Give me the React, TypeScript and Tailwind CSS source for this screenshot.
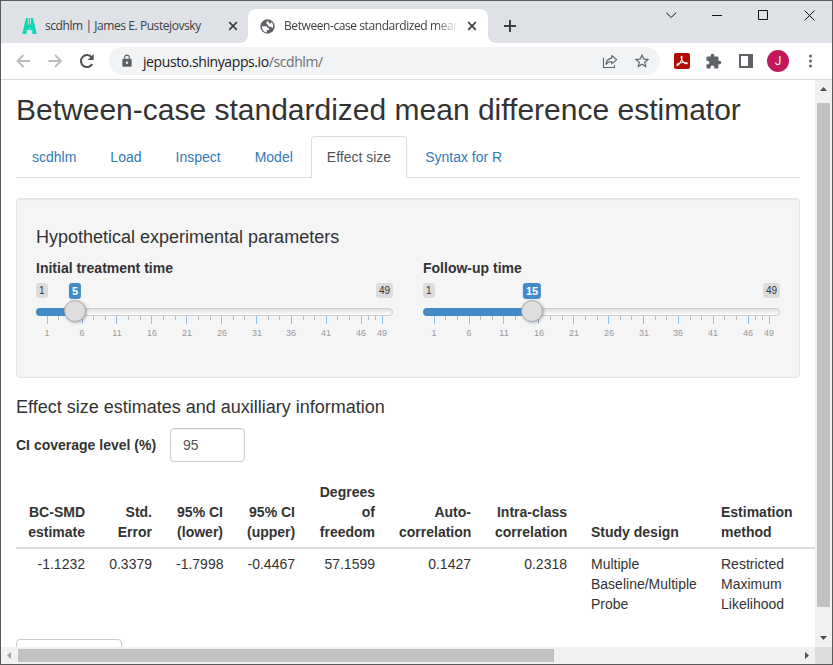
import React from "react";
import { MdExtension, MdLock, MdStarBorder } from "react-icons/md";

const uiFont = "font-['Open_Sans','Noto_Sans',sans-serif]";

function CloseIcon({ className }: { className: string }) {
  return (
    <svg className={className} width="10" height="10" viewBox="0 0 10 10" stroke="#3c4043" strokeWidth="1.7" fill="none">
      <path d="M1.200 1.200l7.600 7.600M8.800 1.200l-7.600 7.600" />
    </svg>
  );
}

function Favicon() {
  return (
    <svg className="ml-[21px] shrink-0" width="15" height="17" viewBox="0 0 15 17">
      <path d="M4 0h7l3.700 16h-4.200L9.600 12H5.200l-.9 4H.2z" fill="#0cd5b8" />
      <path d="M5.900 0v5.500c0 .9.500 1.500 1 1.800V0zM9 0v5.500c0 .9-.5 1.500-1 1.800V0z" fill="#b5e3df" />
      <path d="M7.450 9v3M4.200 13.500l.5-2M10.700 13.500l-.5-2" fill="none" stroke="#8fe3da" strokeWidth=".6" />
    </svg>
  );
}

function GlobeIcon() {
  return (
    <svg className="ml-[12px] shrink-0" width="15" height="15" viewBox="0 0 15 15">
      <circle cx="7.500" cy="7.500" r="7.200" fill="#5f6368" />
      <path d="M1.900 7.200h3.600c1.400 0 2.200.8 2.200 2.100H9v1.600H6.800v2.400c-2.900-.2-5.100-2.900-4.900-6.100z" fill="#fff" />
      <path d="M7.600 1.700c-.3 1.100-1.300 1.300-1.300 2.300 0 1.300 1.700 1.200 1.800 2.600.1 1 1.200 1.200 2.700 1.200.9 0 1.100 1 1.900 1.300.9-2.200.3-4.600-1.300-6-.1 1.200-1 1.400-2 1.300-.7-.1-.4-1.900-1.800-2.700z" fill="#fff" />
    </svg>
  );
}

function TabStrip() {
  return (
    <div className="flex h-[42px] shrink-0 bg-[#dee1e6] text-[#3c4043]">
      <div className="flex h-[34px] w-[239px] items-center self-end">
        <Favicon />
        <span className="ml-[8px] w-[172px] whitespace-nowrap text-[12px] tracking-[-0.43px]">scdhlm | James E. Pustejovsky</span>
        <CloseIcon className="ml-[11px]" />
      </div>
      <svg className="h-2 w-2 shrink-0 self-end" viewBox="0 0 8 8">
        <path d="M8 0v8H0a8 8 0 0 0 8-8z" fill="#fff" />
      </svg>
      <div className="flex h-[34px] w-[240px] items-center self-end rounded-t-lg bg-white">
        <GlobeIcon />
        <span className="ml-[9px] w-[175px] overflow-hidden text-clip whitespace-nowrap text-[12px] tracking-[-0.42px] [mask-image:linear-gradient(to_right,#000_86%,transparent)]">
          Between-case standardized mean
        </span>
        <CloseIcon className="ml-[8px] shrink-0" />
      </div>
      <svg className="h-2 w-2 shrink-0 self-end" viewBox="0 0 8 8">
        <path d="M0 0v8h8a8 8 0 0 1-8-8z" fill="#fff" />
      </svg>
      <svg className="ml-[8px] mt-[19px]" width="12" height="12" viewBox="0 0 12 12" stroke="#3c4043" strokeWidth="2">
        <path d="M6 0v12M0 6h12" />
      </svg>
      <svg className="ml-auto mr-[12px] mt-[8px]" width="154" height="12" viewBox="0 0 154 12" stroke="#111" strokeWidth="1" fill="none">
        <path d="M.2 3.500l5 5 5-5" />
        <path d="M46 6.500h10" />
        <path d="M92.500 1.500h9v9h-9z" />
        <path d="M138.500 1.500l10 10M148.500 1.500l-10 10" />
      </svg>
    </div>
  );
}

function Toolbar() {
  return (
    <div className="flex h-[37px] shrink-0 items-center border-b border-[#dadce0] bg-white">
      <svg className="ml-[14px]" width="15" height="14" viewBox="0 0 15 14" fill="none" stroke="#babcbe" strokeWidth="1.8">
        <path d="M15 7H2.500M8.500 1l-6 6 6 6" />
      </svg>
      <svg className="ml-[18px]" width="15" height="14" viewBox="0 0 15 14" fill="none" stroke="#babcbe" strokeWidth="1.8">
        <path d="M.5 7h12.500M7 1l6 6-6 6" />
      </svg>
      <svg className="ml-[16px]" width="16" height="16" viewBox="0 0 16 16">
        <path d="M13.200 11A6 6 0 1 1 12.600 4.200" fill="none" stroke="#4d5156" strokeWidth="2" />
        <path d="M14.700 1v6H8.700z" fill="#4d5156" />
      </svg>
      <div className="ml-[14px] flex h-[28px] w-[551px] items-center rounded-full bg-[#f1f3f4]">
        <MdLock className="mb-px ml-[11px] text-[#5f6368]" size={14} />
        <span className={`ml-[9px] text-[14px] tracking-[-0.41px] text-[#202124] ${uiFont}`}>
          jepusto.shinyapps.io<span className="text-[#6a6e73]">/scdhlm/</span>
        </span>
        <svg className="ml-auto" width="16" height="15" viewBox="0 0 16 15" fill="none" stroke="#5f6368" strokeWidth="1.1">
          <path d="M1.500 4v9.500h11v-2.500" />
          <path d="M9.700 1.500l5 4.200-5 4.200V7.500c-2.500 0-4.200.8-5.700 2.900.3-3.200 2.400-5.800 5.700-6.300z" strokeLinejoin="round" />
        </svg>
        <MdStarBorder className="mr-[9px] ml-[15px] text-[#5f6368]" size={18} />
      </div>
      <svg className="ml-[14px]" width="16" height="16" viewBox="0 0 16 16" fill="none">
        <rect width="16" height="16" rx="2" fill="#b30b00" />
        <path d="M7.400 3.200c1.400-.1.500 3.400-1 6-1.400 2.500-3.500 4-3.600 2.900 0-1.200 3.500-2.400 6.500-2.600 3.300-.3 4.500.5 3.800 1.100-1 .8-4-1.300-5.200-3.700-.9-1.800-1-3.600-.5-3.700z" stroke="#fff" strokeWidth="1.050" />
      </svg>
      <MdExtension className="ml-[15px] text-[#5f6368]" size={17} />
      <svg className="ml-[17px]" width="14" height="14" viewBox="0 0 14 14">
        <path fillRule="evenodd" d="M0 0h14v14H0zM2 2v10h7V2z" fill="#5f6368" />
      </svg>
      <div className="ml-[14px] flex h-[22px] w-[22px] items-center justify-center rounded-full bg-[#c2185b] font-[Roboto,sans-serif] text-[12px] text-white">J</div>
      <svg className="ml-[19px]" width="4" height="14" viewBox="0 0 4 14" fill="#5f6368">
        <circle cx="2.500" cy="2" r="1.500" />
        <circle cx="2.500" cy="7" r="1.500" />
        <circle cx="2.500" cy="12" r="1.500" />
      </svg>
    </div>
  );
}

const tabs = ["scdhlm", "Load", "Inspect", "Model", "Effect size", "Syntax for R"];

function NavTabs() {
  return (
    <div className="mt-[10px] flex h-[42px] w-[784px] border-b border-[#ddd]">
      {tabs.map((t) => (
        <div
          key={t}
          className={
            t === "Effect size"
              ? "mr-[2px] h-[42px] rounded-t-[4px] border border-b-0 border-[#ddd] bg-white px-[15px] py-[10px] text-[#555]"
              : "mr-[2px] h-[42px] border border-b-0 border-transparent px-[15px] py-[10px] text-[#337ab7]"
          }
        >
          {t}
        </div>
      ))}
    </div>
  );
}

const majors = [1, 6, 11, 16, 21, 26, 31, 36, 41, 46, 49];
const tickX = (v: number) => 11.2 + ((v - 1) * 335) / 48;

function Slider({ label, value }: { label: string; value: number }) {
  const center = Math.round(tickX(value));
  return (
    <div className="w-[357px]">
      <div className="mb-[5px] font-bold">{label}</div>
      <div className="relative h-[57px]">
        <div className="flex justify-between text-[10px] leading-[15px] text-[#333]">
          <span className="rounded-[3px] bg-black/10 px-[3px]">1</span>
          <span className="rounded-[3px] bg-black/10 px-[3px]">49</span>
        </div>
        <span
          className="absolute top-0 -translate-x-1/2 rounded-[3px] bg-[#428bca] px-[3px] text-[11px] leading-[16px] font-bold text-white"
          style={{ left: center }}
        >
          {value}
        </span>
        <div className="mt-[10px] h-[8px] rounded-[8px] border border-[#ccc] bg-gradient-to-b from-[#dedede] to-white" />
        <div className="absolute top-[25px] left-0 h-[8px] rounded-l-[8px] bg-[#428bca]" style={{ width: center }} />
        {majors.map((v, i) => {
          const next = majors[i + 1];
          const gap = next ? (next - v) / 3 : 0;
          return (
            <React.Fragment key={v}>
              <i className="absolute top-[33px] h-[8px] w-px bg-[#99bfe0]" style={{ left: Math.floor(tickX(v)) }} />
              {next && <i className="absolute top-[33px] h-[4px] w-px bg-[#bbb]" style={{ left: Math.floor(tickX(v + gap)) }} />}
              {next && <i className="absolute top-[33px] h-[4px] w-px bg-[#bbb]" style={{ left: Math.floor(tickX(v + gap * 2)) }} />}
              <span className="absolute top-[45px] -translate-x-1/2 text-[9px] leading-[10px] text-[#999]" style={{ left: Math.round(tickX(v)) }}>
                {v}
              </span>
            </React.Fragment>
          );
        })}
        <div
          className="absolute top-[17px] h-[22px] w-[22px] rounded-full border border-[#ababab] bg-[#dedede] shadow-[1px_1px_3px_rgba(0,0,0,0.25)]"
          style={{ left: center - 11 }}
        />
      </div>
    </div>
  );
}

const columns = [
  { head: ["BC-SMD", "estimate"], cell: ["-1.1232"], cls: "w-[81px] text-right" },
  { head: ["Std.", "Error"], cell: ["0.3379"], cls: "w-[67px] text-right" },
  { head: ["95% CI", "(lower)"], cell: ["-1.7998"], cls: "w-[71px] text-right" },
  { head: ["95% CI", "(upper)"], cell: ["-0.4467"], cls: "w-[72px] text-right" },
  { head: ["Degrees", "of", "freedom"], cell: ["57.1599"], cls: "w-[80px] text-right" },
  { head: ["Auto-", "correlation"], cell: ["0.1427"], cls: "w-[96px] text-right" },
  { head: ["Intra-class", "correlation"], cell: ["0.2318"], cls: "w-[96px] text-right" },
  { head: ["Study design"], cell: ["Multiple", "Baseline/Multiple", "Probe"], cls: "w-[130px] text-left" },
  { head: ["Estimation", "method"], cell: ["Restricted", "Maximum", "Likelihood"], cls: "w-[130px] text-left" },
];

const lines = (items: string[]) => items.map((s) => <div key={s}>{s}</div>);

function ResultsTable() {
  return (
    <table className="mt-[15px] w-[823px] table-fixed border-collapse whitespace-nowrap">
      <thead>
        <tr className="h-[71px] border-b-2 border-[#ddd]">
          {columns.map((c, i) => (
            <th key={i} className={`px-[12px] py-[5px] align-bottom font-bold ${c.cls}`}>
              {lines(c.head)}
            </th>
          ))}
        </tr>
      </thead>
      <tbody>
        <tr>
          {columns.map((c, i) => (
            <td key={i} className={`px-[12px] py-[5px] align-top ${c.cls}`}>
              {lines(c.cell)}
            </td>
          ))}
        </tr>
      </tbody>
    </table>
  );
}

function Page() {
  return (
    <main className="h-[567px] w-[814px] overflow-hidden bg-white pt-[13px] pl-[15px] font-['Liberation_Sans',Arial,sans-serif] text-[14px] leading-[20px] text-[#333]">
      <h2 className="text-[30px] leading-[33px] whitespace-nowrap">Between-case standardized mean difference estimator</h2>
      <NavTabs />
      <section className="mt-[20px] h-[180px] w-[784px] rounded-[4px] border border-[#e3e3e3] bg-[#f5f5f5] px-[19px] pt-[28px] shadow-[inset_0_1px_1px_rgba(0,0,0,0.05)]">
        <h4 className="mb-[11px] text-[18px] leading-[20px]">Hypothetical experimental parameters</h4>
        <div className="flex gap-[30px]">
          <Slider label="Initial treatment time" value={5} />
          <Slider label="Follow-up time" value={15} />
        </div>
      </section>
      <h4 className="mt-[19px] text-[18px] leading-[20px]">Effect size estimates and auxilliary information</h4>
      <div className="mt-[11px] flex h-[34px] items-center">
        <label className="w-[154px] font-bold">CI coverage level (%)</label>
        <div className="h-[34px] w-[75px] rounded-[4px] border border-[#ccc] px-[12px] py-[6px] text-[#555] shadow-[inset_0_1px_1px_rgba(0,0,0,0.075)]">95</div>
      </div>
      <ResultsTable />
      <div className="mt-[20px] h-[34px] w-[106px] rounded-[4px] border border-[#ccc] bg-white" />
    </main>
  );
}

export default function App() {
  return (
    <div className={`flex h-[665px] w-[833px] flex-col overflow-hidden border border-[#5c5a5d] bg-white ${uiFont}`}>
      <TabStrip />
      <Toolbar />
      <div className="flex h-[567px] shrink-0">
        <Page />
        <div className="flex w-[17px] flex-col items-center bg-[#f1f1f1]">
          <svg className="mt-[7px]" width="7" height="4" viewBox="0 0 7 4">
            <path d="M0 4l3.500-4L7 4z" fill="#505050" />
          </svg>
          <div className="mt-[12px] h-[504px] w-[13px] bg-[#c1c1c1]" />
          <svg className="mt-[29px]" width="7" height="4" viewBox="0 0 7 4">
            <path d="M0 0l3.500 4L7 0z" fill="#505050" />
          </svg>
        </div>
      </div>
      <div className="flex h-[17px] shrink-0 items-center bg-[#f1f1f1]">
        <svg className="ml-[6px]" width="4" height="7" viewBox="0 0 4 7">
          <path d="M4 0L0 3.500 4 7z" fill="#a3a3a3" />
        </svg>
        <div className="ml-[7px] h-[13px] w-[536px] bg-[#c1c1c1]" />
        <svg className="ml-auto mr-[6px]" width="4" height="7" viewBox="0 0 4 7">
          <path d="M0 0l4 3.500L0 7z" fill="#505050" />
        </svg>
        <div className="h-[17px] w-[17px] bg-[#dcdcdc]" />
      </div>
    </div>
  );
}
